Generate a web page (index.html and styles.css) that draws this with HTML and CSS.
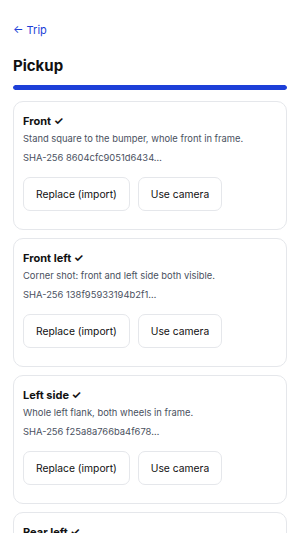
FILE: index.html
```html
<!DOCTYPE html>
<html lang="en">
<head>
    <meta charset="UTF-8">
    <meta name="viewport" content="width=device-width, initial-scale=1.0">
    <title>Pickup</title>
    <link rel="stylesheet" href="styles.css">
</head>
<body>

    <a class="back-link" href="#">← Trip</a>

    <h1 class="page-title">Pickup</h1>

    <div class="progress">
        <div class="progress-fill" style="width: 100%"></div>
    </div>

    <div class="shots">

        <div class="shot-card">
            <h3>Front ✓</h3>
            <p class="shot-hint">Stand square to the bumper, whole front in frame.</p>
            <p class="shot-hash">SHA-256 8604cfc9051d6434…</p>
            <div class="shot-actions">
                <button>Replace (import)</button>
                <button>Use camera</button>
            </div>
        </div>

        <div class="shot-card">
            <h3>Front left ✓</h3>
            <p class="shot-hint">Corner shot: front and left side both visible.</p>
            <p class="shot-hash">SHA-256 138f95933194b2f1…</p>
            <div class="shot-actions">
                <button>Replace (import)</button>
                <button>Use camera</button>
            </div>
        </div>

        <div class="shot-card">
            <h3>Left side ✓</h3>
            <p class="shot-hint">Whole left flank, both wheels in frame.</p>
            <p class="shot-hash">SHA-256 f25a8a766ba4f678…</p>
            <div class="shot-actions">
                <button>Replace (import)</button>
                <button>Use camera</button>
            </div>
        </div>

        <div class="shot-card">
            <h3>Rear left ✓</h3>
            <p class="shot-hint">Corner shot: rear and left side both visible.</p>
            <p class="shot-hash">SHA-256 0c1d7e2a94b3f5a8…</p>
            <div class="shot-actions">
                <button>Replace (import)</button>
                <button>Use camera</button>
            </div>
        </div>

    </div>

</body>
</html>
```

FILE: styles.css
```css
body {
    margin: 0;
    padding: 21px 13px;
    font-family: Inter, "Noto Sans", sans-serif;
    color: #111;
    background: #fff;
}
.back-link {
    display: block;
    font-size: 11px;
    line-height: 18px;
    color: #1d3fd8;
    text-decoration: none;
}
.page-title {
    margin: 17px 0 9px;
    font-size: 15px;
    line-height: 20px;
    font-weight: 700;
}
.progress {
    height: 5px;
    border-radius: 3px;
    background: #e5e7eb;
    overflow: hidden;
}
.progress-fill {
    height: 100%;
    background: #1d3fd8;
    border-radius: 3px;
}
.shots {
    display: flex;
    flex-direction: column;
    gap: 8px;
    margin-top: 11px;
}
.shot-card {
    border: 1px solid #e5e7eb;
    border-radius: 10px;
    padding: 11px 9px 18px;
}
.shot-card h3 {
    margin: 0;
    font-size: 11px;
    line-height: 16px;
    font-weight: 700;
}
.shot-hint {
    margin: 2px 0 0;
    font-size: 9.4px;
    line-height: 16px;
    color: #4a5160;
}
.shot-hash {
    margin: 3px 0 0;
    font-size: 9.4px;
    line-height: 16px;
    color: #4a5160;
}
.shot-actions {
    display: flex;
    gap: 8px;
    margin-top: 11px;
}
.shot-actions button {
    height: 34px;
    padding: 0 12px;
    border: 1px solid #e5e7eb;
    border-radius: 7px;
    background: #fff;
    font-family: Inter, "Noto Sans", sans-serif;
    font-size: 10.3px;
    color: #111;
}
```
